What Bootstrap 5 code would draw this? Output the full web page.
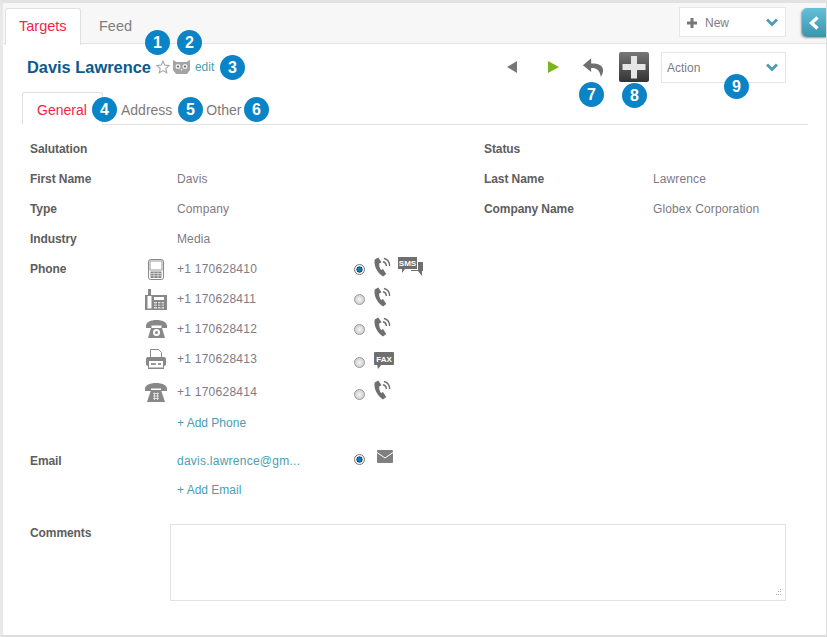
<!DOCTYPE html>
<html lang="en"><head><meta charset="utf-8"><title>Davis Lawrence</title>
<link href="https://cdn.jsdelivr.net/npm/bootstrap@5.3.0/dist/css/bootstrap.min.css" rel="stylesheet">
<style>
html,body{height:100%;margin:0;background:#fff;overflow:hidden}
body{font-family:"Liberation Sans",Arial,sans-serif;font-size:12px;color:#777}
.shell{position:relative;width:827px;height:637px;border-left:3px solid #e8e8e8;border-right:1px solid #ddd;border-bottom:2px solid #ddd;border-top:3px solid #e2e2e2;overflow:hidden}
.topbar{height:41px;background:#f7f7f7;border-bottom:1px solid #e3e3e3;padding:5px 0 0 2px}
.tab-main{height:36px;font-size:14.500px;padding:0 12px 0 13px;line-height:35px;color:#857c7c;border:1px solid transparent;border-bottom:0}
.tab-main.on{color:#f0244a;background:#fff;border-color:#e0e0e0;border-radius:3px 3px 0 0;width:76px;margin-right:4px;height:37px}
.sel{background:#fff;border:1px solid #e6e6e6;display:flex;align-items:center;color:#7d7d86}
.sel-new{position:absolute;left:676px;top:4px;width:107px;height:30px;padding:1px 7px 0;font-size:12px}
.sel-new .plusg{margin-right:8px}
.sel-act{width:125px;height:31px;padding:1px 7px 0 5px;font-size:12px;margin-left:12px;justify-content:space-between}
.chev{margin-left:auto}
.collapse-btn{position:absolute;left:799px;top:5px;width:25px;height:29px;background:linear-gradient(#62c0d8,#3f93ad);border-radius:5px 0 0 5px;box-shadow:-1px 1px 2px #999;display:flex;align-items:center;justify-content:center}
.head{height:46px;margin-bottom:2px;padding:0 0 0 24px}
.person{font-size:16.400px;font-weight:700;color:#0b5a8e}
.edit{color:#4a9db5;font-size:12px;text-decoration:none;margin-left:5px}
.tools{margin-left:auto;margin-right:40px}
.tabs2{height:33px;margin:0 18px 0 19px;border-bottom:1px solid #e3e3e3}
.tab-sub{font-size:14px;color:#7f7a7a;height:33px;line-height:34px;border:1px solid transparent}
.tab-sub.on{color:#f0244a;background:#fff;border-color:#e0e0e0;border-bottom-color:#fff;border-radius:3px 3px 0 0;width:81px;padding-left:14px;height:33px}
.frm{position:relative;padding:9px 0 0 27px}
.rw{display:flex;align-items:center;height:30px}
.lbl{width:147px;font-weight:700;color:#5d5d5d;flex:none;letter-spacing:-.08px}
.val{color:#7f7a85;letter-spacing:.12px}
.col-l{width:454px;display:flex;align-items:center;flex:none}
.lbl2{width:169px;font-weight:700;color:#5d5d5d;flex:none;letter-spacing:-.08px}
.ico{position:absolute;left:140px;width:26px;display:flex;justify-content:center}
.phone{width:177px;flex:none;color:#7f7a85;letter-spacing:.25px}
.lnk{color:#4a9db5;text-decoration:none}
.rad{width:11px;height:11px;border-radius:50%;border:1px solid #999;background:radial-gradient(#f4f4f4,#c4c4c4);margin-right:9px;flex:none}
.rad.on{background:radial-gradient(#0e78b8 30%,#08395a 45%,#fff 52%,#ddd 100%);border-color:#777}
.cmt{width:616px;height:77px;border:1px solid #e3e3e3;margin-left:-7px;position:relative;background:#fff}
.grip{position:absolute;right:3px;bottom:3px}
.num{position:absolute;width:25px;height:25px;border-radius:50%;background:#0a84c6;color:#fff;font-weight:700;font-size:16px;line-height:25px;text-align:center}
.up{margin-top:-4px}
svg{display:block}
</style></head><body>
<svg width="0" height="0" style="position:absolute"><defs>
<symbol id="callic" viewBox="0 0 18 20"><path d="M4.500 0L.8 2C-.5 8 3 15.500 9.500 20l3.500-2.500-3.500-5.500-2 1.200C6 11 5.200 8 5.500 6.200L8 5z" fill="#6f6f6f"/><path d="M9.500 4.500c2.500.5 3.500 2 3.600 4.500M10.500 1c3.800.8 6 3.800 6 8" fill="none" stroke="#6f6f6f" stroke-width="1.500"/></symbol>
</defs></svg>
<div class="shell">
  <div class="topbar d-flex">
    <div class="tab-main on">Targets</div><div class="tab-main">Feed</div>
  </div>
  <div class="sel sel-new">
    <svg class="plusg" width="10" height="10" viewBox="0 0 10 10"><path d="M3.500 0h3v3.500H10v3H6.500V10h-3V6.500H0v-3h3.500z" fill="#777"/></svg>New
    <svg class="chev" width="12" height="9" viewBox="0 0 12 9"><path d="M1 1.500l5 5 5-5" fill="none" stroke="#4f9db5" stroke-width="3"/></svg>
  </div>
  <div class="collapse-btn"><svg width="11" height="14" viewBox="0 0 11 14"><path d="M8.500 1.500l-6 5.500 6 5.500" fill="none" stroke="#fff" stroke-width="3.400"/></svg></div>

  <div class="head d-flex align-items-center">
    <span class="person">Davis Lawrence</span>
    <svg style="margin-left:5px" width="14" height="14" viewBox="0 0 24 24"><path d="M12 2l3 6.800 7.300.8-5.500 5 1.600 7.300L12 18.100 5.600 21.900l1.600-7.300-5.500-5 7.300-.8z" fill="#fff" stroke="#aaa" stroke-width="2"/></svg>
    <svg style="margin-left:3px" width="17" height="14" viewBox="0 0 17 14"><path d="M0 0l3.500 2h10L17 0v10l-3 4H3l-3-4z" fill="#a3a3a3"/><circle cx="5" cy="6.500" r="2.500" fill="#eee"/><circle cx="12" cy="6.500" r="2.500" fill="#eee"/><circle cx="5" cy="6.500" r="1.100" fill="#666"/><circle cx="12" cy="6.500" r="1.100" fill="#666"/><path d="M7.500 9h2l-1 2z" fill="#eee"/></svg>
    <a class="edit" href="#">edit</a>
    <div class="tools d-flex align-items-center">
      <svg width="11" height="12" viewBox="0 0 11 12" style="margin-right:30px"><path d="M10 0v12L0 6z" fill="#777"/></svg>
      <svg width="11" height="12" viewBox="0 0 11 12" style="margin-right:23px"><path d="M0 0v12l11-6z" fill="#7ab51d"/></svg>
      <svg width="22" height="21" viewBox="0 0 24 22" style="margin-right:15px"><path d="M10 1L1 8.500l9 7.500v-4.500c5 0 9 1 10.500 9.500 1.500-2 2.500-4.500 2.500-7 0-5.500-5-7.500-13-7.500z" fill="#6f6f6f"/></svg>
      <svg width="30" height="30" viewBox="0 0 30 30"><defs><linearGradient id="g" x1="0" y1="0" x2="0" y2="1"><stop offset="0" stop-color="#777"/><stop offset="1" stop-color="#333"/></linearGradient></defs><rect width="30" height="30" rx="2" fill="url(#g)"/><path d="M12 4h6v8h8.500v6H18v8.500h-6V18H3.500v-6H12z" fill="#e6e6e6"/></svg>
      <div class="sel sel-act"><span>Action</span><svg width="12" height="9" viewBox="0 0 12 9"><path d="M1 1.500l5 5 5-5" fill="none" stroke="#4f9db5" stroke-width="3"/></svg></div>
    </div>
  </div>

  <div class="tabs2 d-flex">
    <div class="tab-sub on">General</div>
    <div class="tab-sub" style="margin-left:17px">Address</div>
    <div class="tab-sub" style="margin-left:32px">Other</div>
  </div>

  <div class="frm">
    <div class="rw"><div class="col-l"><div class="lbl">Salutation</div></div><div class="lbl2">Status</div></div>
    <div class="rw"><div class="col-l"><div class="lbl">First Name</div><div class="val">Davis</div></div><div class="lbl2">Last Name</div><div class="val">Lawrence</div></div>
    <div class="rw"><div class="col-l"><div class="lbl">Type</div><div class="val">Company</div></div><div class="lbl2">Company Name</div><div class="val">Globex Corporation</div></div>
    <div class="rw"><div class="col-l"><div class="lbl">Industry</div><div class="val">Media</div></div></div>

    <div class="rw"><div class="lbl">Phone</div>
      <div class="ico"><svg width="16" height="21" viewBox="0 0 16 21"><rect x=".5" y=".5" width="15" height="20" rx="2" fill="#fff" stroke="#888"/><rect x="2" y="2" width="12" height="9" fill="#fff" stroke="#999"/><path d="M2.500 12.500h11V19h-11z" fill="#888"/><path d="M2.500 14.500h11M2.500 16.700h11M6 12.500V19M10 12.500V19" stroke="#ddd" stroke-width=".8"/></svg></div>
      <div class="phone">+1 170628410</div><span class="rad on"></span>
      <svg class="up" width="17" height="20"><use href="#callic"/></svg>
      <svg style="margin-left:7px" class="up" width="25" height="20" viewBox="0 0 25 20"><path d="M0 0h19v12H7l-3 4v-4H0z" fill="#6f6f6f"/><path d="M20 5h5v9h-1v5l-4-5h-7v-1h7z" fill="#6f6f6f"/><text x="9.500" y="9" font-size="8" font-weight="700" fill="#fff" text-anchor="middle" font-family="Liberation Sans">SMS</text></svg>
    </div>
    <div class="rw"><div class="lbl"></div>
      <div class="ico"><svg width="22" height="21" viewBox="0 0 22 21"><path d="M0 6h3V0h3v6h16v15H0z" fill="#888"/><rect x="2.500" y="7" width="4" height="12.500" fill="#fff"/><rect x="9" y="8" width="10" height="3" fill="#fff"/><path d="M9 13h10v6.500H9z" fill="#ddd"/><path d="M9 15h10M9 17.300h10M12.500 13v6.500M16 13v6.500" stroke="#777"/></svg></div>
      <div class="phone">+1 170628411</div><span class="rad"></span>
      <svg class="up" width="17" height="20"><use href="#callic"/></svg>
    </div>
    <div class="rw"><div class="lbl"></div>
      <div class="ico"><svg width="21" height="18" viewBox="0 0 21 18"><path d="M0 6C0 2 5 0 10.500 0S21 2 21 6v2h-5.500V5.500h-10V8H0z" fill="#888"/><path d="M5 8h11l3 10H2z" fill="#888"/><circle cx="10.500" cy="12.500" r="3.500" fill="#fff"/><circle cx="10.500" cy="12.500" r="1.500" fill="#888"/></svg></div>
      <div class="phone">+1 170628412</div><span class="rad"></span>
      <svg class="up" width="17" height="20"><use href="#callic"/></svg>
    </div>
    <div class="rw"><div class="lbl"></div>
      <div class="ico"><svg width="20" height="20" viewBox="0 0 20 20"><path d="M4.500.5h8l3 3v5h-11z" fill="#fff" stroke="#888"/><path d="M2 8h16a2 2 0 012 2v5a2 2 0 01-2 2v3H2v-3a2 2 0 01-2-2v-5a2 2 0 012-2z" fill="#888"/><rect x="3" y="12" width="14" height="6.500" fill="#fff"/><rect x="5" y="14" width="5" height="2" fill="#999"/><rect x="12" y="14" width="3" height="2" fill="#999"/></svg></div>
      <div class="phone">+1 170628413</div><span class="rad" style="margin-top:6px"></span>
      <svg width="20" height="18" viewBox="0 0 20 18" style="margin-top:3px"><rect width="20" height="13" rx="1" fill="#6f6f6f"/><path d="M3 12h5l-4 5z" fill="#6f6f6f"/><text x="10" y="10" font-size="8" font-weight="700" fill="#fff" text-anchor="middle" font-family="Liberation Sans">FAX</text></svg>
    </div>
    <div class="rw" style="height:36px"><div class="lbl"></div>
      <div class="ico"><svg width="22" height="19" viewBox="0 0 22 19"><path d="M0 6C0 2 5 0 11 0s11 2 11 6v2h-6V5.500H6V8H0z" fill="#888"/><path d="M6 7h10l4 12H2z" fill="#888"/><path d="M8 10.500h6M8 13h6M8 15.500h6M9.500 9.500v7.500M12.500 9.500v7.500" stroke="#ddd"/></svg></div>
      <div class="phone">+1 170628414</div><span class="rad" style="margin-top:4px"></span>
      <svg class="up" width="17" height="20"><use href="#callic"/></svg>
    </div>
    <div class="rw" style="height:26px"><div class="lbl"></div><a class="lnk" href="#">+ Add Phone</a></div>

    <div class="rw" style="margin-top:10px"><div class="lbl">Email</div>
      <a class="lnk phone" href="#">davis.lawrence@gm...</a><span class="rad on up"></span>
      <svg width="16" height="13" viewBox="0 0 16 13" style="margin-top:-10px;margin-left:3px"><rect width="16" height="13" rx="1" fill="#808080"/><path d="M0 2.500l8 5.500 8-5.500" fill="none" stroke="#fff"/></svg>
    </div>
    <div class="rw" style="height:27px"><div class="lbl"></div><a class="lnk" href="#">+ Add Email</a></div>

    <div class="d-flex" style="margin-top:21px">
      <div class="lbl">Comments</div>
      <div class="cmt"><svg class="grip" width="9" height="9" viewBox="0 0 9 9"><path d="M7 1h1v1H7zM5 3h1v1H5zM7 3h1v1H7zM3 6h1v1H3zM5 6h1v1H5zM7 6h1v1H7z" fill="#aaa"/></svg></div>
    </div>
  </div>

  <span class="num" style="left:142px;top:27px">1</span>
  <span class="num" style="left:174px;top:27px">2</span>
  <span class="num" style="left:217px;top:52px">3</span>
  <span class="num" style="left:89px;top:94px">4</span>
  <span class="num" style="left:175px;top:94px">5</span>
  <span class="num" style="left:241px;top:94px">6</span>
  <span class="num" style="left:576px;top:79px">7</span>
  <span class="num" style="left:619px;top:80px">8</span>
  <span class="num" style="left:721px;top:71px">9</span>
</div>
</body></html>
